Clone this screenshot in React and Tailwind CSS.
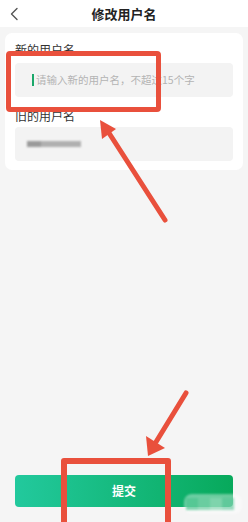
import React from 'react';

const FONT = { fontFamily: '"Noto Sans CJK SC", "Noto Sans", sans-serif' };

const App = () => {
  return (
    <div className="relative w-[248px] h-[522px] overflow-hidden bg-[#f5f5f5] flex flex-col" style={FONT}>
      {/* Header */}
      <div className="h-[27px] bg-white flex items-center relative shrink-0">
        <svg className="absolute left-[9px] top-[7px]" width="11" height="14" viewBox="0 0 11 14">
          <path d="M8 1.5 L2.5 7 L8 12.5" fill="none" stroke="#555" strokeWidth="1.4" strokeLinecap="round" strokeLinejoin="round" />
        </svg>
        <div className="flex-1 text-center text-[13px] font-bold text-[#222] leading-none">修改用户名</div>
      </div>

      {/* Card */}
      <div className="mt-[6px] mx-[5px] bg-white rounded-[7px] px-[10px] pt-[9px] pb-[9px]">
        <div className="text-[12px] leading-[16px] text-[#333]">新的用户名</div>
        <div className="mt-[5px] h-[34px] bg-[#f3f3f3] rounded-[4px] flex items-center pl-[17px]">
          <span className="w-[2px] h-[12px] bg-[#1aa86a] mr-[2px]"></span>
          <span className="text-[10.5px] text-[#b3b3b3]">请输入新的用户名，不超过15个字</span>
        </div>
        <div className="mt-[11px] text-[12px] leading-[16px] text-[#333]">旧的用户名</div>
        <div className="mt-[3px] h-[34px] bg-[#f3f3f3] rounded-[4px] flex items-center pl-[12px]">
          <div className="flex blur-[1px]">
            <span className="w-[14px] h-[6px] bg-[#9a9a9a]"></span>
            <span className="w-[40px] h-[6px] bg-[#b0b0b0]"></span>
          </div>
        </div>
      </div>

      <div className="flex-1"></div>

      {/* Submit button */}
      <div className="mx-[15px] mb-[15px] h-[32px] rounded-[4px] bg-gradient-to-r from-[#22c99d] to-[#07a95b] flex items-center justify-center">
        <span className="text-white text-[12px] font-bold">提交</span>
      </div>

      {/* Watermark blur */}
      <div className="absolute left-[184px] top-[494px] w-[58px] h-[20px] rounded-[8px] bg-white/40 blur-[1px] flex items-center pl-[2px]">
        <span className="w-[12px] h-[12px] bg-[#4cc48f]/70"></span>
        <span className="w-[12px] h-[12px] bg-[#6acd9f]/70"></span>
        <span className="w-[12px] h-[12px] bg-[#88d7b2]/70"></span>
        <span className="w-[12px] h-[12px] bg-[#5ac799]/60"></span>
      </div>

      {/* Annotations */}
      <div className="absolute left-[6px] top-[51px] w-[155px] h-[61px] border-[5px] border-[#e9503c] rounded-[4px]"></div>
      <div className="absolute left-[61px] top-[458px] w-[110px] h-[72px] border-[6px] border-[#e9503c] rounded-[3px]"></div>
      <svg className="absolute left-0 top-0 pointer-events-none" width="248" height="522" viewBox="0 0 248 522">
        <line x1="165" y1="220" x2="109" y2="133" stroke="#e9503c" strokeWidth="5" strokeLinecap="round" />
        <polygon points="100,120 116,129 102,139" fill="#e9503c" />
        <line x1="186" y1="393" x2="156" y2="442" stroke="#e9503c" strokeWidth="5" strokeLinecap="round" />
        <polygon points="148,456 146,436 165,448" fill="#e9503c" />
      </svg>
    </div>
  );
};

export default App;
